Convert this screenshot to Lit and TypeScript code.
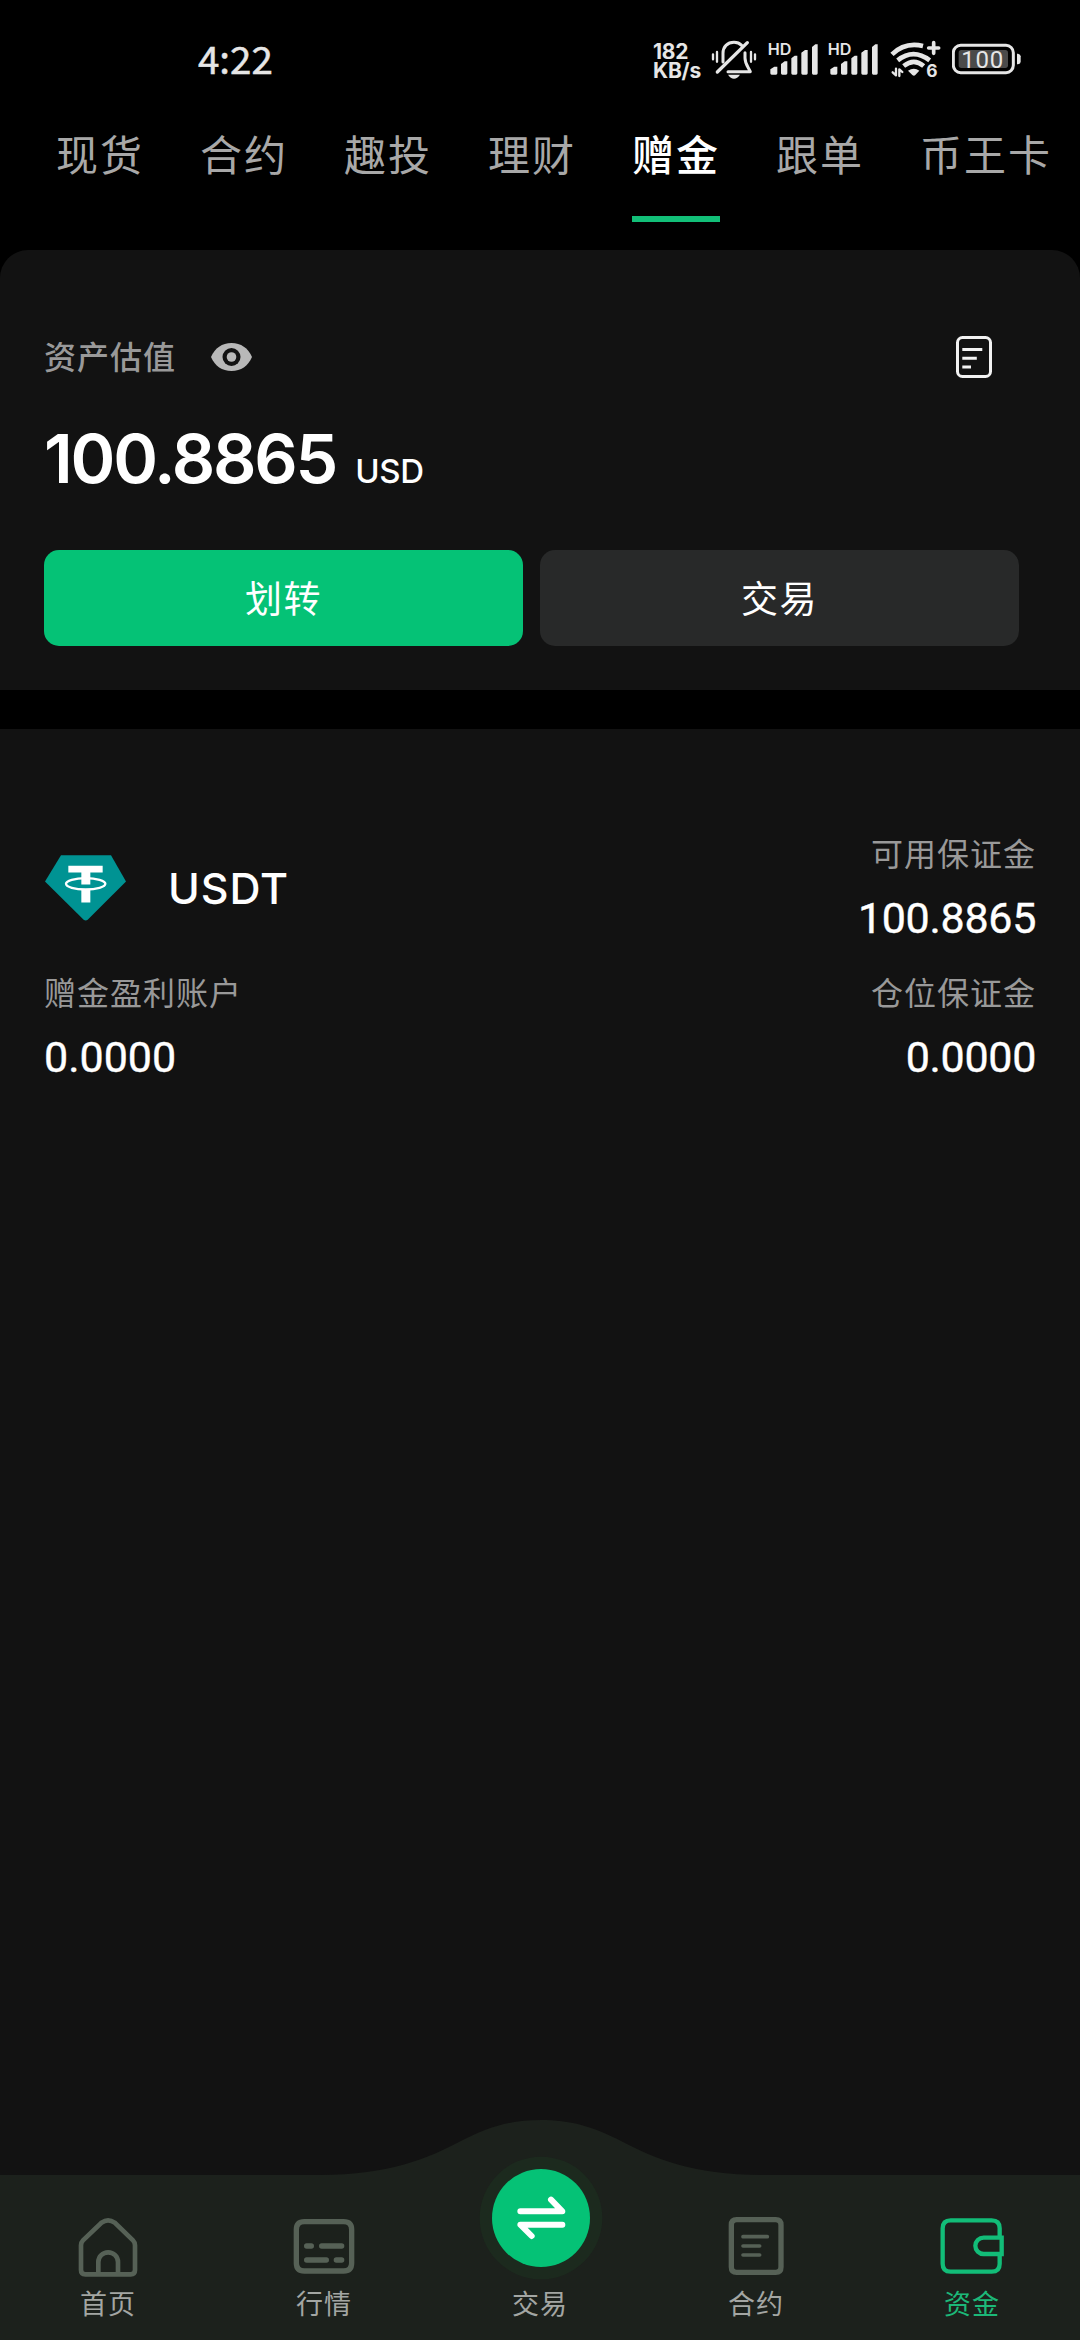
import { LitElement, html, svg, css, nothing } from "lit";
import { customElement, property } from "lit/decorators.js";
import { classMap } from "lit/directives/class-map.js";

const CJK = css`"Noto Sans CJK SC", "Noto Sans", sans-serif`;
const LATIN = css`Inter, "Noto Sans CJK SC", sans-serif`;

@customElement("status-bar")
class StatusBar extends LitElement {
  static styles = css`
    :host { display: flex; height: 120px; box-sizing: border-box; padding: 0 58px 0 198px; align-items: center; color: #e6e6e6; }
    .time { font: 400 38.5px/56px ${CJK}; flex: 1; padding-bottom: 6px; -webkit-text-stroke: 0.5px #e6e6e6; }
    .net { font: 700 21px/19px ${LATIN}; letter-spacing: -0.2px; width: 58px; padding-top: 2px; }
    .net .row { display: block; }
    svg { display: block; height: 40px; fill: #e6e6e6; }
    .bell { width: 46px; }
    .signal { width: 52px; margin-left: 11px; }
    .signal + .signal { margin-left: 8px; }
    .wifi { width: 51px; margin-left: 10px; }
    .battery { width: 70px; margin-left: 11px; }
    .line { fill: none; stroke: #e6e6e6; stroke-width: 9; stroke-linecap: round; stroke-linejoin: round; }
    .slash { stroke-width: 10; }
    .wave { stroke-width: 7; }
    .arc { stroke-width: 14; stroke-linecap: butt; }
    .plus { stroke-width: 11; }
    .hd { font: 600 46px ${LATIN}; }
    .six { font: 700 52px ${LATIN}; }
    .pct { font: 400 72px Roboto, sans-serif; }
    .charge { fill: #4a4a4a; }
  `;

  private signal() {
    return html`<svg class="signal" viewBox="384 60 156 120">
      <text class="hd" x="383" y="105" textLength="71" lengthAdjust="spacingAndGlyphs">HD</text>
      <path d="M391 148l12-8h9v20q0 4-4 4h-13q-4 0-4-4zM423 132l11-8h8v36q0 4-4 4h-11q-4 0-4-4zM454 115l10-8h8v53q0 4-4 4h-10q-4 0-4-4zM484 98l11-8h8v70q0 4-4 4h-11q-4 0-4-4zM516 81l10-8h7v87q0 4-4 4h-9q-4 0-4-4z" />
    </svg>`;
  }

  render() {
    return html`
      <div class="time">4:22</div>
      <div class="net"><span class="row">182</span><span class="row">KB/s</span></div>
      <svg class="bell" viewBox="213 60 138 120">
        <path class="line" d="M249 126V100C249 80 262 67 282 67q14 0 23 9M315 98v16c0 18 9 26 16 41H264" />
        <path class="line slash" d="M232 156L322 68" />
        <path class="line wave" d="M219 103v15M231 96v29M333 96v29M345 103v15" />
        <path d="M264 164h36q-8 12-18 12t-18-12z" />
      </svg>
      ${this.signal()}${this.signal()}
      <svg class="wifi" viewBox="750 60 153 120">
        <path class="line arc" d="M756 103Q795 65 849 78M773 121Q820 84 869 121M791 138q31-25 60 0" />
        <path d="M804 152q18-11 34 0l-12 13q-4 4-9 0z" />
        <path class="line plus" d="M881 68v32M866 84h30" />
        <path class="line wave" d="M768 146v20l-10-9M778 168v-20l9 8" />
        <text class="six" x="859" y="172">6</text>
      </svg>
      <svg class="battery" viewBox="936 60 210 120">
        <rect class="line" x="940" y="76" width="180" height="82" rx="22" />
        <rect class="charge" x="956" y="90" width="148" height="54" rx="8" />
        <path d="M1131 101h3q8 2 8 8v16q0 6-8 8h-3z" />
        <text class="pct" x="964" y="143" textLength="126" lengthAdjust="spacing">100</text>
      </svg>`;
  }
}

@customElement("tab-strip")
class TabStrip extends LitElement {
  @property({ attribute: false }) tabs: string[] = [];
  @property() active = "";
  static styles = css`
    :host { display: flex; gap: 56px; padding: 0 0 0 56px; height: 130px; box-sizing: border-box; overflow: hidden; }
    .tab { height: 102px; box-sizing: border-box; padding-top: 3px; font: 400 42px/60px ${CJK}; letter-spacing: 2px; color: #a8a8a8; white-space: nowrap; border-bottom: 6px solid transparent; }
    .tab.on { color: #fff; border-color: #12bf78; font-weight: 500; }
  `;
  render() {
    return this.tabs.map((t) => html`<div class=${classMap({ tab: true, on: t === this.active })}>${t}</div>`);
  }
}

@customElement("asset-card")
class AssetCard extends LitElement {
  static styles = css`
    :host { display: flex; flex-direction: column; height: 440px; box-sizing: border-box; padding: 82px 61px 44px 44px; background: #121212; border-radius: 28px 28px 0 0; }
    .head { display: flex; align-items: center; height: 50px; padding-right: 27px; }
    .label { font: 500 32px/50px ${CJK}; letter-spacing: 1px; color: #999; flex: none; padding-bottom: 4px; }
    .eye { width: 41px; height: 28px; margin-left: 35px; fill: #b8b8b8; }
    .doc { width: 36px; height: 42px; margin-left: auto; fill: none; stroke: #f2f2f2; stroke-width: 3; }
    .hole { fill: #121212; }
    .value { display: flex; align-items: baseline; height: 80px; margin-top: 36px; color: #fff; }
    .num { font: 600 68px/80px ${LATIN}; letter-spacing: -2.2px; }
    .unit { font: 500 33px/40px ${LATIN}; letter-spacing: -0.3px; margin-left: 19px; }
    .actions { display: flex; gap: 17px; margin-top: auto; }
    .btn { flex: 1; height: 96px; border-radius: 15px; background: #282929; color: #fff; font: 400 37px/94px ${CJK}; letter-spacing: 1.5px; text-align: center; }
    .btn.primary { background: #05c276; }
  `;
  render() {
    return html`
      <div class="head">
        <span class="label">资产估值</span>
        <svg class="eye" viewBox="0 0 41 28">
          <path d="M0 14C4 5 11 0 20.500 0S37 5 41 14C37 23 30 28 20.500 28S4 23 0 14z" />
          <circle class="hole" cx="20.500" cy="14" r="9" /><circle cx="20.500" cy="14" r="4.800" />
        </svg>
        <svg class="doc" viewBox="0 0 36 42">
          <rect x="1.500" y="1.500" width="33" height="39" rx="5" />
          <path d="M6.300 13.500h20M6.300 22.300h14.500M6.300 31h8.700" />
        </svg>
      </div>
      <div class="value"><span class="num">100.8865</span><span class="unit">USD</span></div>
      <div class="actions"><div class="btn primary">划转</div><div class="btn">交易</div></div>`;
  }
}

@customElement("holding-panel")
class HoldingPanel extends LitElement {
  static styles = css`
    :host { display: block; flex: 1; background: #121212; padding: 101px 45px 0 44px; }
    .row { display: flex; justify-content: space-between; height: 139px; }
    .coin { display: flex; align-items: center; height: 115px; }
    .gem { width: 81px; height: 66px; margin: 0 42px 0 1px; }
    .body { fill: #009393; }
    .mark { fill: #fff; }
    .ring { fill: none; stroke: #fff; stroke-width: 7; }
    .name { font: 500 43px/60px ${LATIN}; letter-spacing: 0.9px; color: #fff; }
    .label { font: 400 32px/44px ${CJK}; letter-spacing: 1px; color: #999; }
    .num { font: 400 43px/60px Roboto, ${LATIN}; letter-spacing: 0; color: #fff; margin-top: 14px; -webkit-text-stroke: 0.4px #fff; }
    .end { text-align: right; }
    .end .label { margin-right: -1px; }
    .end .num { letter-spacing: -0.3px; margin-right: -1px; }
  `;
  private stat(label: string, num: string, end = false) {
    return html`<div class=${classMap({ stat: true, end })}><div class="label">${label}</div><div class="num">${num}</div></div>`;
  }
  render() {
    return html`
      <div class="row">
        <div class="coin">
          <svg class="gem" viewBox="135 104 243 197">
            <path class="body" d="M183 104H333L378 183 263 298q-6 4-12 0L135 183z" />
            <path class="mark" d="M205 136h103v20h-37v36h-27v-36h-39zM244 206h27v40h-27z" />
            <ellipse class="ring" cx="257" cy="190" rx="59" ry="17" />
          </svg>
          <span class="name">USDT</span>
        </div>
        ${this.stat("可用保证金", "100.8865", true)}
      </div>
      <div class="row">${this.stat("赠金盈利账户", "0.0000")}${this.stat("仓位保证金", "0.0000", true)}</div>`;
  }
}

const NAV = [
  { label: "首页", box: "226 375 192 192", w: 14, d: "M241 540V466Q241 457 247 451L303 398Q322 384 342 398L397 451Q403 457 403 466V540Q403 553 390 553H254Q241 553 241 540zM293 548V516A29.500 29 0 0 1 352 516V548" },
  { label: "行情", box: "878 375 192 192", w: 16, d: "M915 395h118q24 0 24 24v100q0 24-24 24h-118q-24 0-24-24v-100q0-24 24-24zM922 468h14M967 468h60M922 510h59M1011 510h16" },
  { label: "交易", box: "", w: 0, d: "" },
  { label: "合约", box: "130 375 192 192", w: 16, d: "M168 389h117q16 0 16 16v126q0 16-16 16h-117q-16 0-16-16v-126q0-16 16-16z", thin: "M187 440h73M187 468h50M187 495h50" },
  { label: "资金", box: "778 375 192 192", w: 13, on: true, d: "M957 437V415Q957 391 933 391H810Q786 391 786 415V521Q786 545 810 545H933Q957 545 957 521V498M963 443H909A25 24.500 0 0 0 909 492H963z" },
];

@customElement("bottom-nav")
class BottomNav extends LitElement {
  static styles = css`
    :host { display: flex; position: relative; height: 220px; margin-top: -55px; }
    .bg { position: absolute; left: 0; top: 0; width: 1080px; height: 220px; fill: #1c211c; }
    .item { position: relative; flex: 1; display: flex; flex-direction: column; align-items: center; justify-content: flex-end; padding-bottom: 17px; color: #a3a6a3; }
    .item.on { color: #1cb878; }
    .icon { width: 64px; height: 64px; margin-bottom: 1px; fill: none; stroke: #566156; stroke-linecap: round; }
    .on .icon { stroke: #12bd78; stroke-linecap: butt; }
    .thin { stroke-width: 11; }
    .swap { width: 124px; height: 124px; margin-left: 2px; }
    .glow { fill: #1c2a1e; }
    .disc { fill: #05c276; }
    .arrows { fill: none; stroke: #fff; stroke-width: 18; stroke-linecap: round; stroke-linejoin: round; }
    .label { font: 400 27px/40px ${CJK}; letter-spacing: 1px; margin-top: 3px; }
  `;
  render() {
    return html`
      <svg class="bg" viewBox="0 0 1080 220">
        <path d="M0 55H320C390 55 428 38 459 22C490 6 512 0 541 0S592 6 623 22C654 38 692 55 762 55H1080V220H0z" />
      </svg>
      ${NAV.map((n) => html`<div class=${classMap({ item: true, on: !!n.on })}>
        ${n.d
          ? html`<svg class="icon" viewBox=${n.box} stroke-width=${n.w}>
              <path d=${n.d} />${n.thin ? svg`<path class="thin" d=${n.thin} />` : nothing}
            </svg>`
          : html`<svg class="swap" viewBox="417 198 372 372">
              <circle class="glow" cx="603" cy="384" r="184" />
              <circle class="disc" cx="603" cy="384" r="147" />
              <path class="arrows" d="M541 364H667L633 329M667 404H541L575 438" />
            </svg>`}
        <div class="label">${n.label}</div>
      </div>`)}`;
  }
}

@customElement("app-root")
class AppRoot extends LitElement {
  static styles = css`
    :host { display: flex; flex-direction: column; width: 1080px; height: 2340px; background: #000; overflow: hidden; }
    .gap { height: 39px; flex: none; }
  `;
  render() {
    return html`
      <status-bar></status-bar>
      <tab-strip .tabs=${["现货", "合约", "趣投", "理财", "赠金", "跟单", "币王卡"]} active="赠金"></tab-strip>
      <asset-card></asset-card>
      <div class="gap"></div>
      <holding-panel></holding-panel>
      <bottom-nav></bottom-nav>`;
  }
}
